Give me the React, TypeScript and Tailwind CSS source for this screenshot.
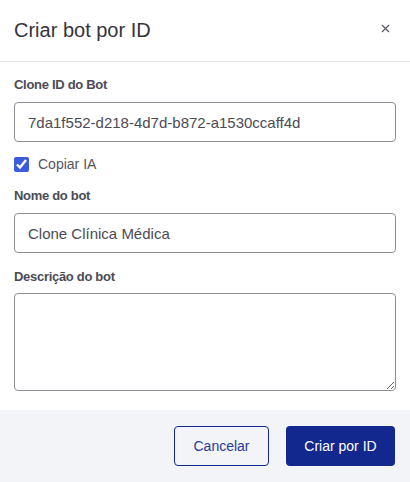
import { X } from "lucide-react";

const font = { fontFamily: "'Liberation Sans', Arial, sans-serif" };

const Label = ({ text, className = "" }: { text: string; className?: string }) => (
  <label className={`block text-[13px] leading-[18px] font-bold text-[#4b4b55] tracking-[-0.3px] ${className}`}>
    {text}
  </label>
);

export default function App() {
  return (
    <div className="w-[410px] h-[482px] bg-white flex flex-col" style={font}>
      <div className="h-[62px] flex items-center justify-between px-[14px] border-b border-[#e3e3e8] shrink-0">
        <h2 className="text-[20px] text-[#34343c] mt-[-2px]">Criar bot por ID</h2>
        <X className="size-[13px] text-[#55555e] mr-[4px] mt-[-4px]" strokeWidth={2} />
      </div>

      <div className="flex-1 px-[14px] pt-[14px]">
        <Label text="Clone ID do Bot" />
        <input
          readOnly
          value="7da1f552-d218-4d7d-b872-a1530ccaff4d"
          className="mt-[8px] w-full h-[40px] rounded-[4px] border border-[#8e8e97] px-[13px] text-[15px] text-[#4b4b55] outline-none"
        />
        <div className="mt-[12px] h-[20px] flex items-center gap-[9px]">
          <input
            type="checkbox"
            defaultChecked
            className="size-[15px] m-0 accent-[#3c5ce0] rounded-[3px]"
          />
          <span className="text-[14px] text-[#55555e]">Copiar IA</span>
        </div>
        <Label text="Nome do bot" className="mt-[13px]" />
        <input
          readOnly
          value="Clone Clínica Médica"
          className="mt-[8px] w-full h-[40px] rounded-[4px] border border-[#8e8e97] px-[13px] text-[15px] text-[#4b4b55] outline-none"
        />
        <Label text="Descrição do bot" className="mt-[15px]" />
        <textarea
          className="mt-[7px] block w-full h-[98px] rounded-[4px] border border-[#8e8e97] px-[13px] py-[10px] text-[15px] outline-none"
        />
      </div>

      <div className="h-[72px] bg-[#f3f4f8] flex items-center justify-end gap-[17px] pr-[15px] shrink-0">
        <button className="w-[95px] h-[40px] rounded-[4px] border border-[#13288f] text-[14px] text-[#2a3a9a]">
          Cancelar
        </button>
        <button className="w-[109px] h-[40px] rounded-[4px] bg-[#13288f] text-[14px] text-white">
          Criar por ID
        </button>
      </div>
    </div>
  );
}
